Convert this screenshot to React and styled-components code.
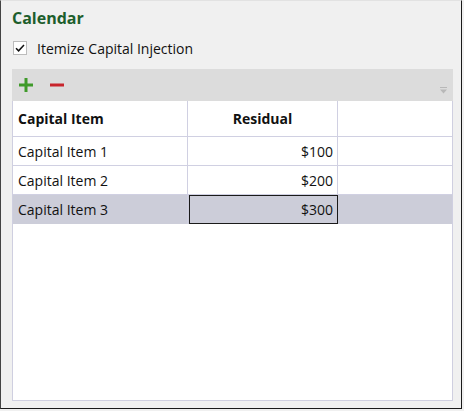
import React from 'react'
import styled, { createGlobalStyle } from 'styled-components'

const GlobalStyle = createGlobalStyle`
  html, body {
    margin: 0;
    padding: 0;
    background: #f0f0f0;
  }
  body {
    font-family: "Open Sans", "Noto Sans", sans-serif;
  }
`

const rows = [
  { name: 'Capital Item 1', residual: '$100' },
  { name: 'Capital Item 2', residual: '$200' },
  { name: 'Capital Item 3', residual: '$300', selected: true },
]

function App() {
  return (
    <>
      <GlobalStyle />
      <Panel>
        <Title>Calendar</Title>
        <CheckRow>
          <CheckBox>
            <svg width="12" height="12" viewBox="0 0 12 12">
              <path d="M2 6.2 L4.6 8.8 L10 3" fill="none" stroke="#111" strokeWidth="1.5" />
            </svg>
          </CheckBox>
          <span>Itemize Capital Injection</span>
        </CheckRow>
        <Grid>
          <Toolbar>
            <ToolButton title="Add">
              <svg width="14" height="14" viewBox="0 0 14 14">
                <rect x="5.5" y="0" width="3" height="14" fill="#3f9a2a" />
                <rect x="0" y="5.5" width="14" height="3" fill="#3f9a2a" />
              </svg>
            </ToolButton>
            <ToolButton title="Remove">
              <svg width="14" height="14" viewBox="0 0 14 14">
                <rect x="0" y="5.5" width="14" height="3" fill="#c8252c" />
              </svg>
            </ToolButton>
            <Spacer />
            <MenuGlyph>
              <svg width="7" height="7" viewBox="0 0 7 7">
                <rect x="0" y="0" width="7" height="1" fill="#b8b8b8" />
                <path d="M0 2.5 H7 L3.5 6.5 Z" fill="#b8b8b8" />
              </svg>
            </MenuGlyph>
          </Toolbar>
          <Table>
            <HeadRow>
              <HeadCell>Capital Item</HeadCell>
              <HeadCell $center>Residual</HeadCell>
              <HeadCell />
            </HeadRow>
            {rows.map((r) => (
              <Row key={r.name} $selected={r.selected}>
                <Cell>{r.name}</Cell>
                <Cell $right $active={r.selected}>{r.residual}</Cell>
                <Cell />
              </Row>
            ))}
          </Table>
        </Grid>
      </Panel>
    </>
  )
}

export default App

const Panel = styled.div`
  box-sizing: border-box;
  width: 462px;
  height: 409px;
  background: #f0f0f0;
  border: 1px solid #1a1a1a;
  border-top-color: #e2e2e2;
  border-left-color: #444;
  padding: 4px 8px 7px 11px;
  display: flex;
  flex-direction: column;
`

const Title = styled.div`
  font-size: 16px;
  font-weight: 700;
  color: #1d5e2c;
  height: 26px;
  line-height: 26px;
`

const CheckRow = styled.div`
  display: flex;
  align-items: center;
  gap: 10px;
  margin-top: 9px;
  font-size: 14px;
  color: #111;
  height: 16px;
  padding-left: 1px;
`

const CheckBox = styled.div`
  box-sizing: border-box;
  width: 14px;
  height: 14px;
  background: #fff;
  border: 1px solid #bcbcbc;
  display: flex;
  align-items: center;
  justify-content: center;
`

const Grid = styled.div`
  margin-top: 13px;
  flex: 1;
  display: flex;
  flex-direction: column;
  width: 441px;
`

const Toolbar = styled.div`
  height: 32px;
  background: #dcdcdc;
  display: flex;
  align-items: center;
  padding: 0 6px 0 7px;
  gap: 17px;
`

const ToolButton = styled.div`
  display: flex;
  align-items: center;
  justify-content: center;
  width: 14px;
  height: 14px;
`

const Spacer = styled.div`
  flex: 1;
`

const MenuGlyph = styled.div`
  display: flex;
  align-self: flex-end;
  margin-bottom: 7px;
`

const Table = styled.div`
  flex: 1;
  background: #fff;
  border: 1px solid #cfcfe0;
  border-top: none;
`

const HeadRow = styled.div`
  display: grid;
  grid-template-columns: 175px 150px 1fr;
  height: 35px;
  border-bottom: 1px solid #d0d0e2;
`

const HeadCell = styled.div`
  box-sizing: border-box;
  font-size: 14px;
  font-weight: 700;
  color: #111;
  display: flex;
  align-items: center;
  justify-content: ${(p) => (p.$center ? 'center' : 'flex-start')};
  padding-left: ${(p) => (p.$center ? '0' : '5px')};
  border-right: 1px solid #d0d0e2;
  &:last-child {
    border-right: none;
  }
`

const Row = styled.div`
  display: grid;
  grid-template-columns: 175px 150px 1fr;
  height: 29px;
  box-sizing: border-box;
  border-bottom: ${(p) => (p.$selected ? 'none' : '1px solid #d0d0e2')};
  background: ${(p) => (p.$selected ? '#cccdd9' : '#fff')};
`

const Cell = styled.div`
  box-sizing: border-box;
  font-size: 14px;
  color: #111;
  display: flex;
  align-items: center;
  justify-content: ${(p) => (p.$right ? 'flex-end' : 'flex-start')};
  padding: ${(p) => (p.$right ? '0 4px 0 0' : '0 0 0 5px')};
  border-right: 1px solid #d0d0e2;
  ${(p) => p.$active && `
    border: 1px solid #1a1a1a;
    margin-left: 1px;
  `}
  &:last-child {
    border-right: none;
  }
`
